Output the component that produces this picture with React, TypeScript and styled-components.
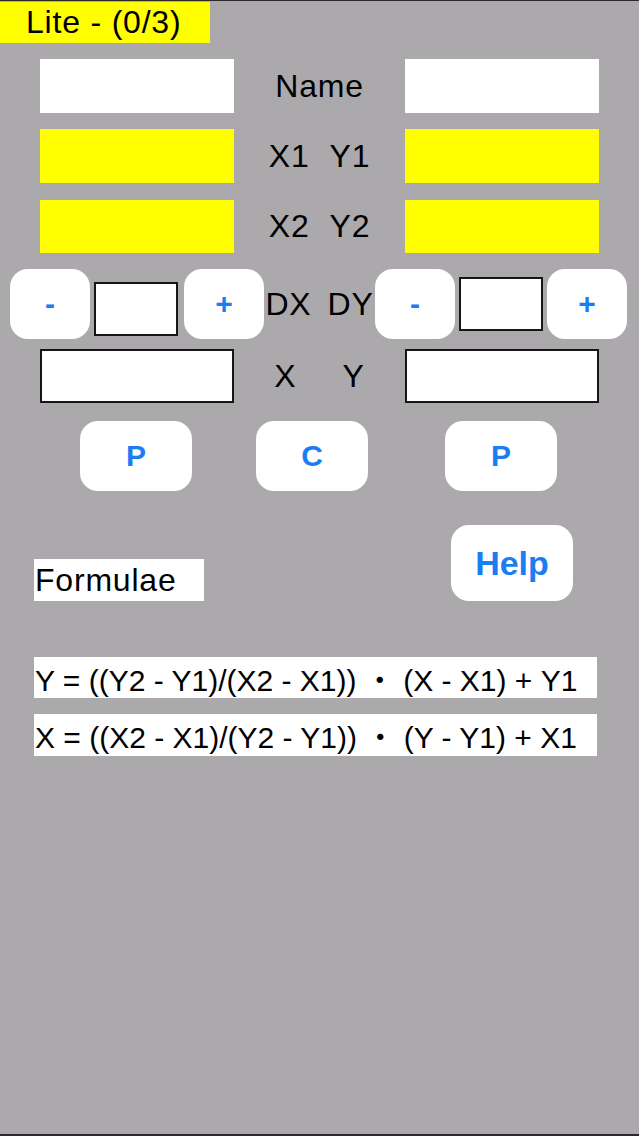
import React from "react";
import styled, { createGlobalStyle } from "styled-components";

const GlobalStyle = createGlobalStyle`
  html, body {
    margin: 0;
    padding: 0;
    background: #aba9ac;
  }
  * {
    box-sizing: border-box;
  }
`;

const font = `"Liberation Sans", Arial, "Noto Sans CJK JP", sans-serif`;

const Screen = styled.div`
  width: 639px;
  height: 1136px;
  background: #aba9ac;
  border-top: 1px solid #2a2a2a;
  border-bottom: 2px solid #2a2a2a;
  font-family: ${font};
  color: #000;
  overflow: hidden;
`;

const LiteBar = styled.div`
  width: 210px;
  height: 41px;
  margin-top: 1px;
  background: #ffff00;
  display: flex;
  align-items: center;
  padding-left: 26px;
  font-size: 32px;
  letter-spacing: 0.8px;
`;

const Row = styled.div<{ $top: number; $left: number; $end?: boolean }>`
  display: flex;
  align-items: ${(p) => (p.$end ? "flex-end" : "center")};
  margin-top: ${(p) => p.$top}px;
  padding-left: ${(p) => p.$left}px;
`;

const Field = styled.div<{ $fill: "white" | "yellow"; $outlined?: boolean; $w?: number; $h?: number }>`
  width: ${(p) => p.$w ?? 194}px;
  height: ${(p) => p.$h ?? 54}px;
  background: ${(p) => (p.$fill === "yellow" ? "#ffff00" : "#ffffff")};
  border: ${(p) => (p.$outlined ? "2px solid #151515" : "none")};
  flex-shrink: 0;
`;

// the small DX / DY value box sits a little off the buttons' centre line
const StepField = styled(Field)<{ $top: number }>`
  align-self: flex-start;
  margin-top: ${(p) => p.$top}px;
  margin-left: 4px;
`;

const Middle = styled.div<{ $w: number; $gap: number }>`
  width: ${(p) => p.$w}px;
  display: flex;
  justify-content: center;
  gap: ${(p) => p.$gap}px;
  font-size: 32px;
  letter-spacing: 0.8px;
  white-space: nowrap;
  flex-shrink: 0;
`;

const Key = styled.button<{ $w: number; $h: number; $size: number; $ml?: number }>`
  width: ${(p) => p.$w}px;
  height: ${(p) => p.$h}px;
  margin-left: ${(p) => p.$ml ?? 0}px;
  border: none;
  border-radius: 18px;
  background: #ffffff;
  color: #1a7ef2;
  font-family: ${font};
  font-weight: bold;
  font-size: ${(p) => p.$size}px;
  display: flex;
  align-items: center;
  justify-content: center;
  padding: 0;
  flex-shrink: 0;
`;

const Caption = styled.div`
  width: 170px;
  height: 42px;
  background: #ffffff;
  display: flex;
  align-items: center;
  padding-left: 1px;
  font-size: 32px;
  letter-spacing: 0.8px;
`;

const Formula = styled.div<{ $top: number; $h: number }>`
  width: 563px;
  height: ${(p) => p.$h}px;
  margin-top: ${(p) => p.$top}px;
  margin-left: 34px;
  background: #ffffff;
  display: flex;
  align-items: center;
  padding-left: 1px;
  font-size: 30px;
  white-space: nowrap;
`;

const Stepper = ({ top, gap }: { top: number; gap: number }) => (
  <>
    <Key $w={80} $h={70} $size={30}>-</Key>
    <StepField $fill="white" $outlined $w={84} $h={54} $top={top} />
    <Key $w={80} $h={70} $size={30} $ml={gap}>+</Key>
  </>
);

export default function App() {
  return (
    <Screen>
      <GlobalStyle />
      <LiteBar>Lite - (0/3)</LiteBar>

      <Row $top={16} $left={40}>
        <Field $fill="white" />
        <Middle $w={171} $gap={0}>
          <span>Name</span>
        </Middle>
        <Field $fill="white" />
      </Row>

      <Row $top={16} $left={40}>
        <Field $fill="yellow" />
        <Middle $w={171} $gap={20}>
          <span>X1</span>
          <span>Y1</span>
        </Middle>
        <Field $fill="yellow" />
      </Row>

      <Row $top={17} $left={40}>
        <Field $fill="yellow" $h={53} />
        <Middle $w={171} $gap={20}>
          <span>X2</span>
          <span>Y2</span>
        </Middle>
        <Field $fill="yellow" $h={53} />
      </Row>

      <Row $top={16} $left={10}>
        <Stepper top={13} gap={6} />
        <Middle $w={111} $gap={16}>
          <span>DX</span>
          <span>DY</span>
        </Middle>
        <Stepper top={8} gap={4} />
      </Row>

      <Row $top={10} $left={40}>
        <Field $fill="white" $outlined />
        <Middle $w={171} $gap={46}>
          <span>X</span>
          <span>Y</span>
        </Middle>
        <Field $fill="white" $outlined />
      </Row>

      <Row $top={18} $left={80}>
        <Key $w={112} $h={70} $size={30}>P</Key>
        <Key $w={112} $h={70} $size={30} $ml={64}>C</Key>
        <Key $w={112} $h={70} $size={30} $ml={77}>P</Key>
      </Row>

      <Row $top={34} $left={34} $end>
        <Caption>Formulae</Caption>
        <Key $w={122} $h={76} $size={34} $ml={247}>Help</Key>
      </Row>

      <Formula $top={56} $h={41}>Y = ((Y2 - Y1)/(X2 - X1)) ・ (X - X1) + Y1</Formula>
      <Formula $top={16} $h={42}>X = ((X2 - X1)/(Y2 - Y1)) ・ (Y - Y1) + X1</Formula>
    </Screen>
  );
}
